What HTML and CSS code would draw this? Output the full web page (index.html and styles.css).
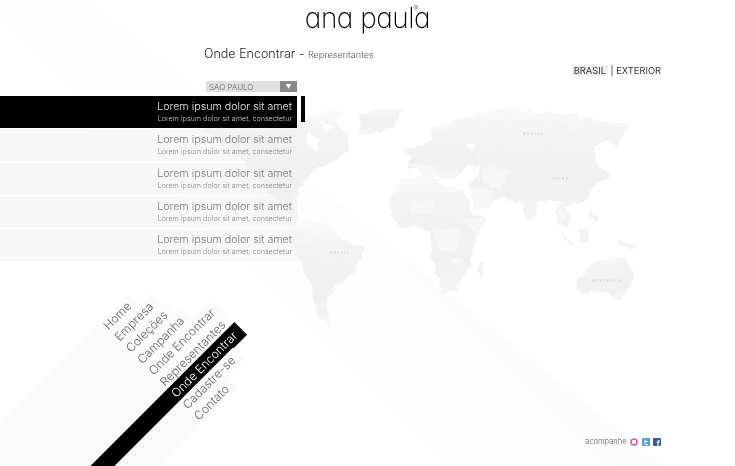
FILE: index.html
```html
<!DOCTYPE html>
<html lang="pt">
<head>
<meta charset="utf-8">
<title>Ana Paula</title>
<link rel="stylesheet" href="styles.css">
</head>
<body>
<div class="page">
  <div class="shade"></div>
  <svg class="map" viewBox="-300 0 1350 780" aria-hidden="true">
    <defs>
      <filter id="coast" x="-5%" y="-5%" width="110%" height="110%">
        <feTurbulence type="fractalNoise" baseFrequency="0.035" numOctaves="3" seed="4"/>
        <feDisplacementMap in="SourceGraphic" scale="22" xChannelSelector="R" yChannelSelector="G"/>
        <feGaussianBlur stdDeviation="1.6"/>
      </filter>
      <linearGradient id="fade" x1="0" y1="0" x2="0" y2="1">
        <stop offset="0" stop-color="#fafafa"/>
        <stop offset=".25" stop-color="#f3f3f3"/>
        <stop offset=".7" stop-color="#f1f1f1"/>
        <stop offset="1" stop-color="#f6f6f6"/>
      </linearGradient>
    </defs>
    <g class="land" filter="url(#coast)">
      <polygon points="-290,120 -200,70 -120,80 -60,60 20,70 70,60 130,62 105,90 140,130 150,185 110,210 60,230 20,265 -5,300 -25,345 0,395 -40,370 -90,310 -150,240 -210,170"/>
      <polygon points="180,75 240,58 310,55 280,110 210,130 185,140"/>
      <polygon points="0,400 50,395 90,410 130,450 190,470 165,550 110,585 75,640 95,712 60,690 40,620 25,560 0,510 -30,440"/>
      <polygon points="270,330 300,270 370,255 430,285 490,300 520,370 565,380 525,445 510,520 470,600 425,612 400,520 385,430 350,410 300,410 275,380"/>
      <polygon points="560,505 545,565 532,550 545,510"/>
      <polygon points="310,180 350,170 395,150 400,105 450,95 460,130 530,180 540,230 500,225 470,265 420,270 380,240 320,235 340,200"/>
      <polygon points="450,95 540,70 640,50 740,68 830,78 985,108 950,170 920,150 880,170 895,230 930,250 880,290 860,330 800,350 770,330 720,330 690,400 660,340 600,320 560,360 500,290 530,260 540,220 530,180 460,130"/>
      <polygon points="770,330 810,370 800,420 770,395"/>
      <polygon points="765,410 840,480 810,465"/>
      <polygon points="830,420 870,415 860,460 835,455"/>
      <polygon points="945,450 1015,465 985,480"/>
      <polygon points="870,350 900,405 875,385"/>
      <polygon points="900,270 935,240 930,265"/>
      <polygon points="830,570 880,520 960,500 975,490 1005,560 960,632 900,600 835,612"/>
    </g>
    <g class="patch" filter="url(#coast)">
      <polygon points="320,320 370,340 410,325 395,370 340,375"/>
      <polygon points="495,385 560,380 530,420 505,415"/>
      <polygon points="445,500 490,510 470,530"/>
      <polygon points="500,290 580,300 570,345 530,360"/>
      <polygon points="400,420 480,420 470,490 420,480"/>
      <polygon points="540,230 630,240 600,300 550,280"/>
      <polygon points="320,215 400,230 440,265 380,260"/>
      <polygon points="770,350 800,370 790,410"/>
    </g>
    <g class="lake" filter="url(#coast)">
      <polygon points="20,130 60,150 45,185 25,165"/>
      <polygon points="60,100 100,110 80,125"/>
      <polygon points="500,150 530,170 510,185"/>
    </g>
    <g class="labels">
      <text x="670" y="134">RUSSIA</text>
      <text x="755" y="269">CHINA</text>
      <text x="90" y="492">BRASIL</text>
      <text x="875" y="576">AUSTRALIA</text>
    </g>
  </svg>

  <header class="logo-bar">
    <span class="logo">ana paula</span>
    <span class="reg">®</span>
  </header>

  <h1 class="title">Onde Encontrar - <small>Representantes</small></h1>

  <div class="regions"><span class="current">BRASIL</span> | EXTERIOR</div>

  <div class="select">
    <span class="select-value">SAO PAULO</span>
    <span class="select-btn">▼</span>
  </div>

  <div class="list-wrap">
    <ul class="list">
      <li class="row row-active"><b>Lorem ipsum dolor sit amet</b><i>Lorem ipsum dolor sit amet, consectetur</i></li>
      <li class="row"><b>Lorem ipsum dolor sit amet</b><i>Lorem ipsum dolor sit amet, consectetur</i></li>
      <li class="row"><b>Lorem ipsum dolor sit amet</b><i>Lorem ipsum dolor sit amet, consectetur</i></li>
      <li class="row"><b>Lorem ipsum dolor sit amet</b><i>Lorem ipsum dolor sit amet, consectetur</i></li>
      <li class="row"><b>Lorem ipsum dolor sit amet</b><i>Lorem ipsum dolor sit amet, consectetur</i></li>
    </ul>
    <div class="scroll-thumb"></div>
  </div>

  <footer class="social">
    <span>acompanhe</span>
    <svg class="ico" viewBox="0 0 8 8"><circle cx="4" cy="4" r="3" fill="none" stroke="#e0589a" stroke-width="1.5"/></svg>
    <svg class="ico" viewBox="0 0 8 8"><rect width="8" height="8" rx="1" fill="#5b9bd0"/><path d="M3 1.5v4.2q0 .9 1 .9h2M3 3.5h3" fill="none" stroke="#fff"/></svg>
    <svg class="ico" viewBox="0 0 8 8"><rect width="8" height="8" rx="1" fill="#3b5a9a"/><path d="M5 8V3.6q0-1.4 1.6-1.4M3.7 4.4h3" fill="none" stroke="#fff" stroke-width="1.1"/></svg>
  </footer>

  <nav class="menu">
    <a>Home</a>
    <a>Empresa</a>
    <a>Coleções</a>
    <a>Campanha</a>
    <a>Onde Encontrar</a>
    <a>Representantes</a>
    <a class="on">Onde Encontrar</a>
    <a>Cadastre-se</a>
    <a>Contato</a>
  </nav>
</div>
</body>
</html>
```
FILE: styles.css
```css
* { box-sizing: border-box; }
html, body { margin: 0; padding: 0; background: #fff; }
body { font-family: Inter, "Liberation Sans", sans-serif; font-weight: 300; color: #444; }
.page { position: relative; width: 735px; height: 466px; overflow: hidden; display: flex; flex-direction: column; will-change: transform; }

.shade { position: absolute; inset: 0; background: linear-gradient(45deg, #fff 35%, #fafafa 72%); clip-path: polygon(87px 0, 700px 495px, 0 495px, 0 0); }
.map { position: absolute; left: 200px; top: 90px; width: 450px; height: 260px; }
.land { fill: url(#fade); }
.patch { fill: #f7f7f7; }
.lake { fill: #fff; }
.labels { fill: #c4c4c4; font-size: 9px; letter-spacing: 5px; font-weight: 400; }

.logo-bar { position: relative; height: 44px; padding-top: 11px; display: flex; justify-content: center; flex: none; }
.logo { font-size: 28px; font-weight: 200; color: #000; height: 14px; line-height: 14px; letter-spacing: -.5px; font-feature-settings: "cv11"; }
.reg { position: absolute; left: 413px; top: 6px; font-size: 8px; line-height: 5px; color: #666; }

.title { position: relative; margin: 0 0 0 204px; font-size: 12.5px; font-weight: 300; line-height: 20px; color: #222; flex: none; }
.title small { font-size: 9.1px; color: #555; }

.regions { position: relative; align-self: flex-end; margin: 0 74px 0 0; font-size: 9.3px; font-weight: 400; line-height: 12px; height: 13px; color: #333; flex: none; }
.current { background: #efefef; padding: 0 2px; margin-left: -2px; }

.select { position: relative; margin: 3px 0 0 206px; width: 91px; height: 11px; background: #e0e0e0; display: flex; justify-content: space-between; flex: none; }
.select-value { font-size: 8px; line-height: 12px; color: #666; padding-left: 3px; }
.select-btn { width: 17px; background: #888; color: #fff; font-size: 6px; display: flex; align-items: center; justify-content: center; }

.list-wrap { position: relative; margin-top: 4px; display: flex; gap: 4px; flex: none; }
.list { list-style: none; margin: 0; padding: 0; width: 297px; display: flex; flex-direction: column; gap: 1.25px; }
.row { height: 32px; background: rgba(240,240,240,.5); padding: 4px 5px 0 0; display: flex; flex-direction: column; align-items: flex-end; color: #777; }
.row b { font-size: 10.7px; font-weight: 300; line-height: 14px; white-space: nowrap; }
.row i { font-size: 7.2px; font-style: normal; line-height: 10px; margin-top: 0; white-space: nowrap; color: #888; }
.row-active { background: #000; color: #eee; }
.row-active i { color: #ccc; }
.scroll-thumb { width: 4px; height: 26px; background: #000; }

.social { position: relative; margin: auto 74px 20px 0; align-self: flex-end; display: flex; align-items: center; gap: 3.5px; font-size: 7.5px; color: #555; line-height: 8px; }
.ico { width: 8px; height: 8px; display: block; }

.menu { position: absolute; left: 99.5px; top: 321.5px; width: 0; height: 0; transform: rotate(-45deg); transform-origin: 0 0; display: flex; flex-direction: column; align-items: flex-start; }
.menu a { display: block; flex: none; height: 16px; margin-left: -300px; padding: 0 7px 0 300px; font-size: 12px; line-height: 16px; font-weight: 300; white-space: nowrap; color: #666; background: #fafafa; }
.menu a.on { background: #000; color: #fff; height: 18px; line-height: 18px; margin-top: -1px; margin-bottom: -1px; }
```
